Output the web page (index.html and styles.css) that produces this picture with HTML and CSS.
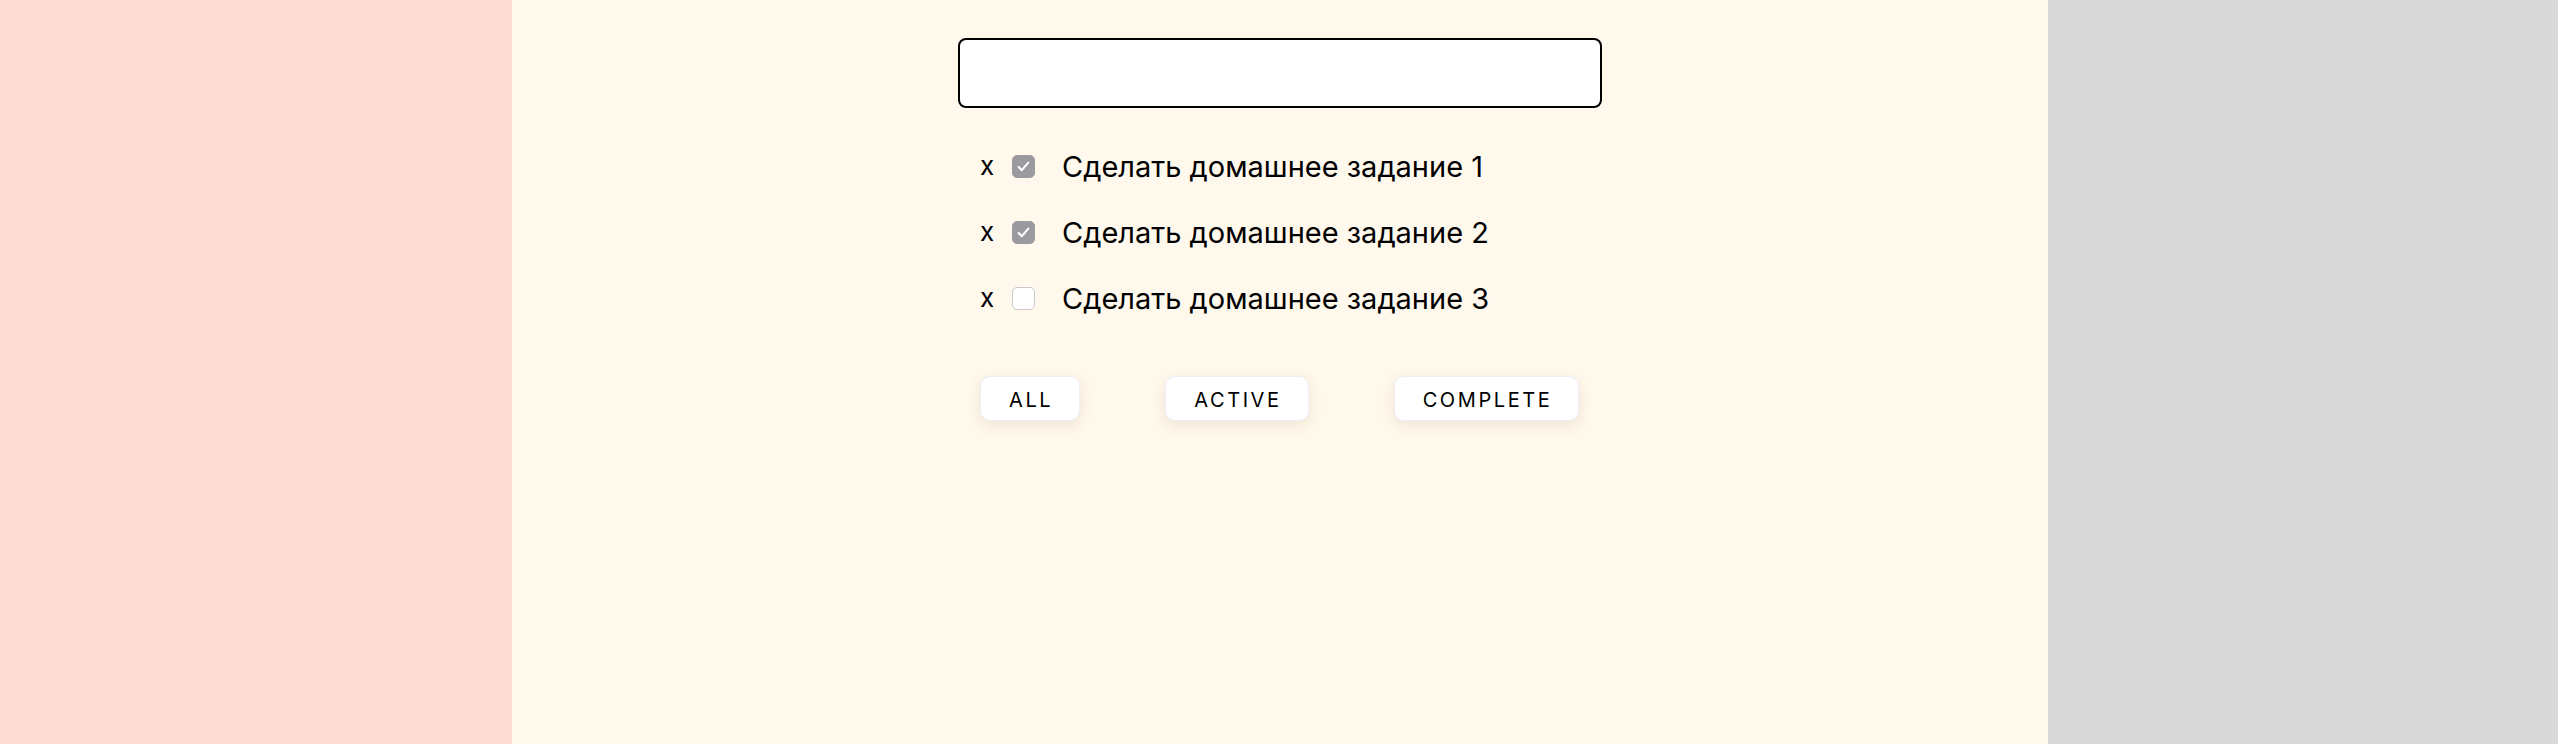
FILE: index.html
```html
<!DOCTYPE html>
<html lang="ru">
<head>
<meta charset="utf-8">
<title>Todo</title>
<link rel="stylesheet" href="styles.css">
</head>
<body>
<div class="layout">
  <aside class="side side-left"></aside>
  <main class="center">
    <div class="todo">
      <input class="new-task" type="text">
      <ul class="tasks">
        <li class="task">
          <span class="remove">x</span>
          <span class="check checked"><svg viewBox="0 0 24 24"><path d="M6.5 12.5l3.6 3.7L17.5 7.5" fill="none" stroke="#fff" stroke-width="2.4" stroke-linecap="round" stroke-linejoin="round"/></svg></span>
          <span class="label">Сделать домашнее задание 1</span>
        </li>
        <li class="task">
          <span class="remove">x</span>
          <span class="check checked"><svg viewBox="0 0 24 24"><path d="M6.5 12.5l3.6 3.7L17.5 7.5" fill="none" stroke="#fff" stroke-width="2.4" stroke-linecap="round" stroke-linejoin="round"/></svg></span>
          <span class="label">Сделать домашнее задание 2</span>
        </li>
        <li class="task">
          <span class="remove">x</span>
          <span class="check"></span>
          <span class="label">Сделать домашнее задание 3</span>
        </li>
      </ul>
      <div class="filters">
        <button class="filter">ALL</button>
        <button class="filter">ACTIVE</button>
        <button class="filter">COMPLETE</button>
      </div>
    </div>
  </main>
  <aside class="side side-right"></aside>
</div>
</body>
</html>
```
FILE: styles.css
```css
* { box-sizing: border-box; }
html, body { margin: 0; padding: 0; height: 100%; }
body { font-family: Inter, "Noto Sans", sans-serif; color: #000; }
.layout {
  display: grid;
  grid-template-columns: 512px 1536px 1fr;
  height: 744px;
}
.side-left { background: #ffdcd5; }
.side-right { background: #d9d9d9; }
.center {
  background: #fff8ec;
  display: flex;
  justify-content: center;
  padding-top: 38px;
}
.todo { width: 644px; display: flex; flex-direction: column; }
.new-task {
  width: 644px;
  height: 70px;
  border: 2px solid #000;
  border-radius: 8px;
  background: #fff;
  outline: none;
  font-size: 24px;
  padding: 0 16px;
}
.tasks {
  list-style: none;
  margin: 25px 0 0;
  padding: 0 0 0 22px;
}
.task {
  height: 66px;
  display: flex;
  align-items: center;
}
.remove {
  font-size: 26px;
  width: 32px;
  line-height: 1;
}
.check {
  width: 23px;
  height: 23px;
  border-radius: 5px;
  background: #fff;
  border: 1px solid #c9c9c9;
  display: flex;
  align-items: center;
  justify-content: center;
  margin-right: 27px;
}
.check.checked { background: #9a9a9f; border-color: #9a9a9f; }
.check svg { width: 23px; height: 23px; }
.label { font-size: 29px; }
.filters {
  display: flex;
  gap: 85px;
  margin-top: 45px;
  padding-left: 22px;
}
.filter {
  height: 45px;
  padding: 2px 26px 0 28px;
  border: 1px solid #eeeef8;
  border-radius: 10px;
  background: #fff;
  font-family: Inter, "Noto Sans", sans-serif;
  font-size: 20px;
  letter-spacing: 2.6px;
  color: #000;
  box-shadow: 0 4px 14px rgba(120, 90, 40, 0.12);
}
```
